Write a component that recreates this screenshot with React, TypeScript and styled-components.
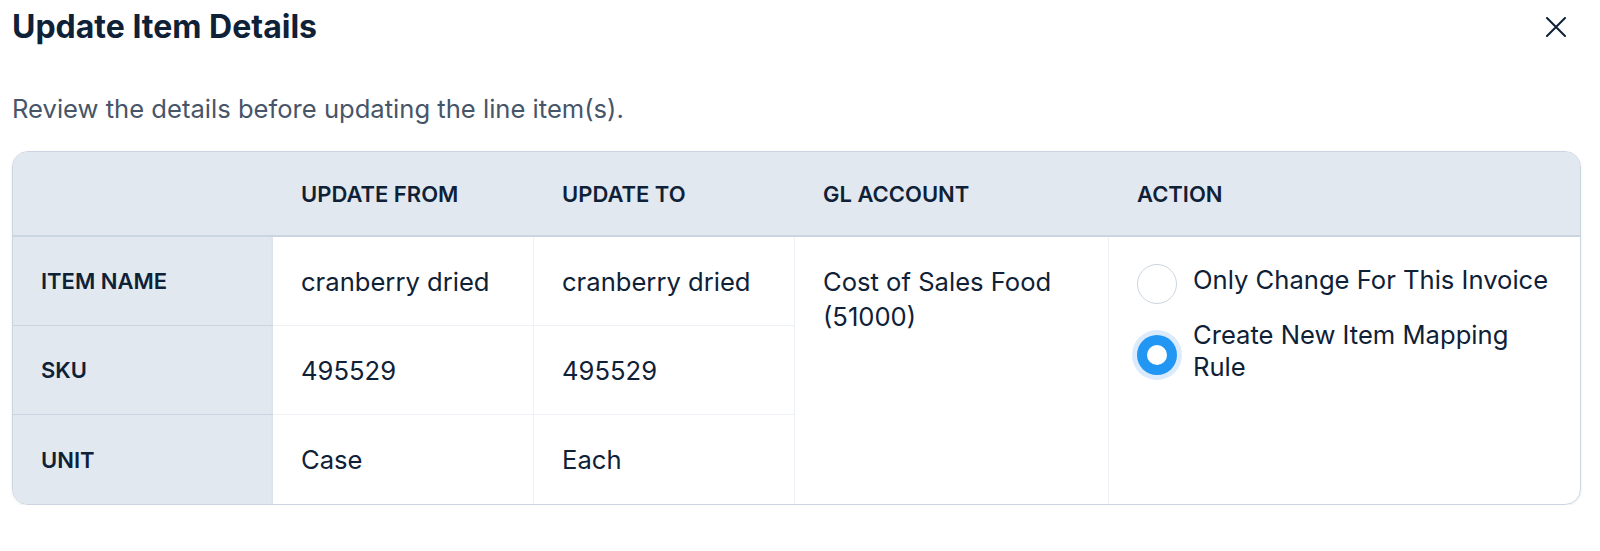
import React from 'react';
import styled, { createGlobalStyle } from 'styled-components';

const GlobalStyle = createGlobalStyle`
  body {
    margin: 0;
    background: #ffffff;
    font-family: Inter, "Noto Sans", sans-serif;
    color: #0f2137;
  }
`;

const Page = styled.div`
  padding: 0 19px 0 12px;
`;

const Header = styled.div`
  display: flex;
  align-items: center;
  justify-content: space-between;
  height: 54px;
`;

const Title = styled.h1`
  margin: 0;
  font-size: 32px;
  font-weight: 700;
  line-height: 54px;
  color: #0f2137;
`;

const CloseButton = styled.button`
  width: 40px;
  height: 40px;
  margin-right: 5px;
  padding: 0;
  border: none;
  background: transparent;
  display: flex;
  align-items: center;
  justify-content: center;
  cursor: pointer;
`;

const Subtitle = styled.p`
  margin: 38px 0 25px;
  font-size: 25.6px;
  line-height: 34px;
  color: #475569;
`;

const TableFrame = styled.div`
  border: 1px solid #cbd5e1;
  border-radius: 16px;
  overflow: hidden;
  box-shadow: 0 1px 3px rgba(15, 33, 55, 0.08);
`;

const Table = styled.table`
  width: 100%;
  border-collapse: separate;
  border-spacing: 0;
  table-layout: fixed;
`;

const HeadRow = styled.tr`
  height: 85px;
`;

const BodyRow = styled.tr`
  height: 89px;
`;

const HeadCell = styled.th`
  padding: 0 28px;
  background: #e2e8f0;
  border-bottom: 2px solid #cbd5e1;
  text-align: left;
  font-size: 22px;
  font-weight: 600;
  color: #0f2137;
`;

const RowLabel = styled.th<{ $last?: boolean }>`
  padding: 0 28px;
  background: #e2e8f0;
  border-bottom: ${(p) => (p.$last ? 'none' : '1.5px solid #cbd5e1')};
  box-shadow: inset -3px 0 4px -3px rgba(15, 33, 55, 0.06);
  text-align: left;
  font-size: 22px;
  font-weight: 600;
  color: #0f2137;
`;

const Cell = styled.td<{ $last?: boolean }>`
  padding: 0 28px;
  border-bottom: ${(p) => (p.$last ? 'none' : '1px solid #eef2f6')};
  border-right: 1px solid #eef2f6;
  font-size: 25.6px;
  color: #0f2137;
`;

const TallCell = styled.td<{ $padTop: number; $noRight?: boolean }>`
  vertical-align: top;
  padding: ${(p) => p.$padTop}px ${(p) => (p.$noRight ? 16 : 28)}px 0 28px;
  border-right: ${(p) => (p.$noRight ? 'none' : '1px solid #eef2f6')};
  font-size: 25.6px;
  line-height: 35px;
  color: #0f2137;
`;

const OptionList = styled.div`
  display: flex;
  flex-direction: column;
  gap: 15px;
`;

const Option = styled.label`
  display: flex;
  align-items: center;
  gap: 16px;
  font-size: 25.6px;
  line-height: 32px;
  cursor: pointer;
`;

const Radio = styled.span<{ $checked?: boolean }>`
  flex: none;
  box-sizing: border-box;
  width: 40px;
  height: 40px;
  margin-top: 8px;
  border-radius: 50%;
  display: flex;
  align-items: center;
  justify-content: center;
  background: ${(p) => (p.$checked ? '#2196f3' : '#ffffff')};
  border: ${(p) => (p.$checked ? 'none' : '1.5px solid #cbd5e1')};
  box-shadow: ${(p) => (p.$checked ? '0 0 0 5px #dcebfb' : 'none')};

  &::after {
    content: '';
    display: ${(p) => (p.$checked ? 'block' : 'none')};
    width: 20px;
    height: 20px;
    border-radius: 50%;
    background: #ffffff;
  }
`;

const rows = [
  { label: 'ITEM NAME', from: 'cranberry dried', to: 'cranberry dried' },
  { label: 'SKU', from: '495529', to: '495529' },
  { label: 'UNIT', from: 'Case', to: 'Each' },
];

const App = () => {
  const [choice, setChoice] = React.useState<'invoice' | 'rule'>('rule');

  return (
    <>
      <GlobalStyle />
      <Page>
        <Header>
          <Title>Update Item Details</Title>
          <CloseButton aria-label="Close">
            <svg width="20" height="20" viewBox="0 0 20 20">
              <path d="M1 1L19 19M19 1L1 19" stroke="#0f2137" strokeWidth="2" strokeLinecap="round" />
            </svg>
          </CloseButton>
        </Header>

        <Subtitle>Review the details before updating the line item(s).</Subtitle>

        <TableFrame>
          <Table>
            <colgroup>
              <col style={{ width: 260 }} />
              <col style={{ width: 261 }} />
              <col style={{ width: 261 }} />
              <col style={{ width: 314 }} />
              <col />
            </colgroup>
            <thead>
              <HeadRow>
                <HeadCell />
                <HeadCell>UPDATE FROM</HeadCell>
                <HeadCell>UPDATE TO</HeadCell>
                <HeadCell>GL ACCOUNT</HeadCell>
                <HeadCell>ACTION</HeadCell>
              </HeadRow>
            </thead>
            <tbody>
              {rows.map((row, i) => {
                const last = i === rows.length - 1;
                return (
                  <BodyRow key={row.label}>
                    <RowLabel scope="row" $last={last}>
                      {row.label}
                    </RowLabel>
                    <Cell $last={last}>{row.from}</Cell>
                    <Cell $last={last}>{row.to}</Cell>
                    {i === 0 && (
                      <>
                        <TallCell rowSpan={3} $padTop={27}>
                          Cost of Sales Food (51000)
                        </TallCell>
                        <TallCell rowSpan={3} $padTop={19} $noRight>
                          <OptionList>
                            <Option onClick={() => setChoice('invoice')}>
                              <Radio $checked={choice === 'invoice'} />
                              Only Change For This Invoice
                            </Option>
                            <Option onClick={() => setChoice('rule')}>
                              <Radio $checked={choice === 'rule'} />
                              Create New Item Mapping Rule
                            </Option>
                          </OptionList>
                        </TallCell>
                      </>
                    )}
                  </BodyRow>
                );
              })}
            </tbody>
          </Table>
        </TableFrame>
      </Page>
    </>
  );
};

export default App;
